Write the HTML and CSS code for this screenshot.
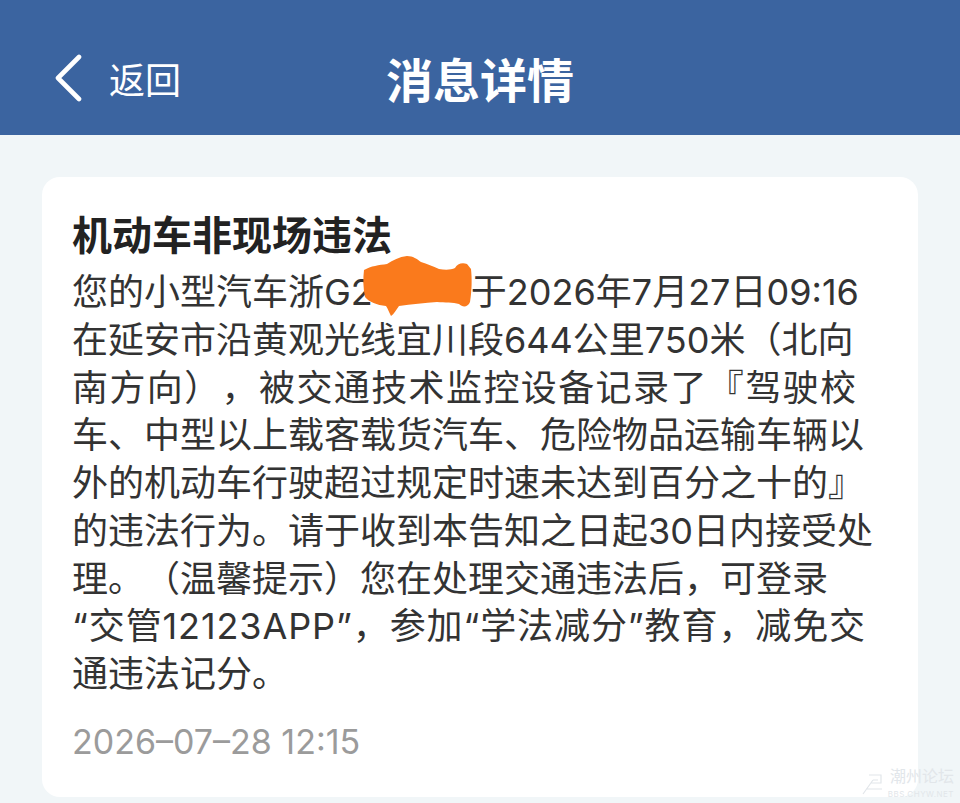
FILE: index.html
```html
<!DOCTYPE html>
<html lang="zh-CN">
<head>
<meta charset="utf-8">
<title>消息详情</title>
<link rel="stylesheet" href="styles.css">
</head>
<body>
<header class="nav">
  <div class="back">
    <svg class="chev" width="30" height="48" viewBox="0 0 30 48" aria-hidden="true">
      <polyline points="24,3 3,24 24,45" fill="none" stroke="#ffffff" stroke-width="4.6" stroke-linecap="round" stroke-linejoin="round"/>
    </svg>
    <span class="back-text">返回</span>
  </div>
  <h1 class="nav-title">消息详情</h1>
  <div class="nav-side"></div>
</header>
<main class="page">
  <section class="card">
    <h2 class="card-title">机动车非现场违法</h2>
    <div class="body">
      <div class="ln">您的小型汽车浙G2<span class="redact"><svg class="blob" width="110" height="60" viewBox="0 0 110 60" aria-hidden="true"><path d="M1 14 C8 10 16 9 24 8 C30 4 36 1 44 0 C50 0 54 3 58 6 C64 8 70 10 76 13 C82 14 88 14 92 12 C94 8 99 6 104 8 L108 13 C109 22 109 34 107 46 C105 51 100 52 96 48 C90 46 82 47 74 46 C62 47 48 48 36 50 C33 54 31 58 28 60 C26 56 25 53 23 50 C14 49 6 46 2 41 C0 32 0 22 1 14 Z" fill="#fa7a1c"/></svg></span>于2026年7月27日09:16</div>
      <div class="ln">在延安市沿黄观光线宜川段644公里750米（北向</div>
      <div class="ln ln-wide">南方向），被交通技术监控设备记录了『驾驶校</div>
      <div class="ln">车、中型以上载客载货汽车、危险物品运输车辆以</div>
      <div class="ln">外的机动车行驶超过规定时速未达到百分之十的』</div>
      <div class="ln">的违法行为。请于收到本告知之日起30日内接受处</div>
      <div class="ln">理。（温馨提示）您在处理交通违法后，可登录</div>
      <div class="ln ln-loose">“交管12123APP”，参加“学法减分”教育，减免交</div>
      <div class="ln">通违法记分。</div>
    </div>
    <p class="time">2026–07–28 12:15</p>
  </section>
</main>
<div class="mark">
  <svg class="mark-icon" width="26" height="26" viewBox="0 0 26 26" aria-hidden="true">
    <path d="M3 25 L13 11 M9 6 h12 v8 h-10 M13 11 l5 0 M6 20 h16" fill="none" stroke="#e2e6ea" stroke-width="1.2"/>
  </svg>
  <div class="mark-text"><span class="mark-cn">潮州论坛</span><span class="mark-en">BBS.CHYW.NET</span></div>
</div>
</body>
</html>
```
FILE: styles.css
```css
* { box-sizing: border-box; }
html, body { margin: 0; padding: 0; }
body {
  width: 960px;
  height: 803px;
  overflow: hidden;
  background: #f1f6f8;
  font-family: "Inter", "Noto Sans CJK SC", sans-serif;
  color: #333333;
  position: relative;
  text-spacing-trim: space-all;
}
.nav {
  height: 135px;
  background: #3b64a0;
  display: grid;
  grid-template-columns: 1fr auto 1fr;
  align-items: center;
  padding-top: 20px;
  color: #ffffff;
}
.back {
  display: flex;
  align-items: center;
  padding-left: 55px;
  gap: 24px;
}
.chev { display: block; }
.back-text {
  font-family: "Noto Sans CJK SC", sans-serif;
  font-size: 36px;
  line-height: 48px;
}
.nav-title {
  margin: 0;
  font-family: "Noto Sans CJK SC", sans-serif;
  font-size: 47px;
  font-weight: 700;
  line-height: 60px;
}
.page {
  padding: 42px 42px 0;
}
.card {
  background: #ffffff;
  border-radius: 18px;
  padding: 32px 30px 33px;
}
.card-title {
  margin: 0 0 12px;
  font-family: "Noto Sans CJK SC", sans-serif;
  font-size: 40px;
  font-weight: 700;
  line-height: 48px;
  color: #222222;
}
.body {
  font-size: 36px;
  line-height: 47.75px;
  white-space: nowrap;
}
.ln { display: block; }
.ln-wide { letter-spacing: 1.4px; }
.ln-loose { letter-spacing: 0.9px; }
.redact {
  display: inline-block;
  position: relative;
  width: 98px;
  height: 1px;
}
.blob {
  position: absolute;
  left: -10px;
  top: -48px;
}
.time {
  margin: 21px 0 0;
  font-size: 34px;
  line-height: 44px;
  color: #9b9b9b;
}
.mark {
  position: absolute;
  right: 6px;
  bottom: 4px;
  display: flex;
  align-items: flex-end;
  gap: 2px;
}
.mark-icon { display: block; margin-bottom: 4px; }
.mark-text {
  display: flex;
  flex-direction: column;
  align-items: flex-end;
  gap: 2px;
  color: #e2e6ea;
}
.mark-cn { font-family: "Noto Sans CJK SC", sans-serif; font-size: 16px; line-height: 24px; }
.mark-en { font-family: "Inter", sans-serif; font-size: 8px; line-height: 10px; letter-spacing: 0.5px; }
```
